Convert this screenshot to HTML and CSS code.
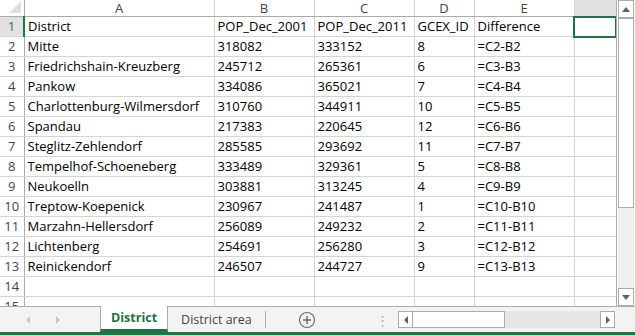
FILE: index.html
```html
<!DOCTYPE html>
<html lang="en">
<head>
    <meta charset="UTF-8">
    <title>District - Excel</title>
    <link rel="stylesheet" href="styles.css">
</head>
<body>
    <div class="sheet">
        <div class="grid">
            <table class="cells">
                <colgroup>
                    <col class="c-hdr"><col class="c-a"><col class="c-b"><col class="c-c"><col class="c-d"><col class="c-e"><col class="c-f">
                </colgroup>
                <tr class="colhead">
                    <th class="corner"><span class="tri"></span></th>
                    <th>A</th><th>B</th><th>C</th><th>D</th><th>E</th><th class="sel">&nbsp;</th>
                </tr>
                <tr><th class="sel">1</th><td>District</td><td>POP_Dec_2001</td><td>POP_Dec_2011</td><td>GCEX_ID</td><td>Difference</td><td class="active"></td></tr>
                <tr><th>2</th><td>Mitte</td><td>318082</td><td>333152</td><td>8</td><td>=C2-B2</td><td></td></tr>
                <tr><th>3</th><td>Friedrichshain-Kreuzberg</td><td>245712</td><td>265361</td><td>6</td><td>=C3-B3</td><td></td></tr>
                <tr><th>4</th><td>Pankow</td><td>334086</td><td>365021</td><td>7</td><td>=C4-B4</td><td></td></tr>
                <tr><th>5</th><td>Charlottenburg-Wilmersdorf</td><td>310760</td><td>344911</td><td>10</td><td>=C5-B5</td><td></td></tr>
                <tr><th>6</th><td>Spandau</td><td>217383</td><td>220645</td><td>12</td><td>=C6-B6</td><td></td></tr>
                <tr><th>7</th><td>Steglitz-Zehlendorf</td><td>285585</td><td>293692</td><td>11</td><td>=C7-B7</td><td></td></tr>
                <tr><th>8</th><td>Tempelhof-Schoeneberg</td><td>333489</td><td>329361</td><td>5</td><td>=C8-B8</td><td></td></tr>
                <tr><th>9</th><td>Neukoelln</td><td>303881</td><td>313245</td><td>4</td><td>=C9-B9</td><td></td></tr>
                <tr><th>10</th><td>Treptow-Koepenick</td><td>230967</td><td>241487</td><td>1</td><td>=C10-B10</td><td></td></tr>
                <tr><th>11</th><td>Marzahn-Hellersdorf</td><td>256089</td><td>249232</td><td>2</td><td>=C11-B11</td><td></td></tr>
                <tr><th>12</th><td>Lichtenberg</td><td>254691</td><td>256280</td><td>3</td><td>=C12-B12</td><td></td></tr>
                <tr><th>13</th><td>Reinickendorf</td><td>246507</td><td>244727</td><td>9</td><td>=C13-B13</td><td></td></tr>
                <tr><th>14</th><td></td><td></td><td></td><td></td><td></td><td></td></tr>
                <tr><th>15</th><td></td><td></td><td></td><td></td><td></td><td></td></tr>
            </table>
        </div>
        <div class="vscroll">
            <div class="arrow up"><span class="tri-up"></span></div>
            <div class="track"><div class="thumb"></div></div>
            <div class="arrow down"><span class="tri-down"></span></div>
        </div>
    </div>

    <div class="tabbar">
        <div class="nav">
            <span class="tri-left"></span>
            <span class="tri-right"></span>
        </div>
        <div class="tab current">District</div>
        <div class="tab">District area</div>
        <div class="tabsep"></div>
        <div class="addsheet">
            <svg width="18" height="18" viewBox="0 0 18 18">
                <circle cx="9" cy="9" r="7.5" fill="none" stroke="#6a6a6a" stroke-width="1.2"/>
                <path d="M9 5v8M5 9h8" stroke="#6a6a6a" stroke-width="1.4"/>
            </svg>
        </div>
        <div class="grip">&#8942;</div>
        <div class="hscroll">
            <div class="arrow left"><span class="tri-left dark"></span></div>
            <div class="htrack"><div class="hthumb"></div></div>
            <div class="arrow right"><span class="tri-right dark"></span></div>
        </div>
    </div>
    <div class="status"></div>
</body>
</html>
```

FILE: styles.css
```css
html, body {
    margin: 0;
    padding: 0;
    width: 635px;
    height: 335px;
    overflow: hidden;
    background: #fff;
    font-family: "Open Sans", "Liberation Sans", sans-serif;
}
.sheet {
    display: flex;
    height: 306px;
    overflow: hidden;
}
.grid {
    width: 616px;
    overflow: hidden;
}
.cells {
    border-collapse: collapse;
    table-layout: fixed;
    width: 616px;
    font-size: 13px;
    color: #000;
}
.c-hdr { width: 24px; }
.c-a { width: 190px; }
.c-b { width: 100px; }
.c-c { width: 100px; }
.c-d { width: 60px; }
.c-e { width: 100px; }
.c-f { width: 42px; }

.cells td, .cells th {
    height: 19px;
    padding: 0 0 0 3px;
    border: 1px solid #d4d4d4;
    white-space: nowrap;
    overflow: hidden;
    text-align: left;
    font-weight: normal;
    line-height: 19px;
}
.cells th {
    color: #444;
    text-align: center;
    padding: 0;
    border-color: #ababab #d4d4d4 #d4d4d4 #d4d4d4;
    border-right-color: #ababab;
}
.cells tr:first-child th {
    height: 16px;
    line-height: 16px;
    border-top: none;
    border-bottom-color: #ababab;
    border-right-color: #d4d4d4;
}
.cells tr th:first-child {
    border-left: none;
    border-right-color: #ababab;
}
.cells th.sel {
    background: #e1e1e1;
    color: #217346;
}
.cells tr:not(:first-child) th.sel {
    border-right: 2px solid #217346;
}
.cells .corner {
    position: relative;
}
.tri {
    position: absolute;
    right: 3px;
    bottom: 3px;
    width: 0;
    height: 0;
    border-left: 12px solid transparent;
    border-bottom: 12px solid #dfdfdf;
}
.cells td.active {
    outline: 2px solid #217346;
    outline-offset: -1px;
}

.vscroll {
    width: 19px;
    display: flex;
    flex-direction: column;
    background: #fff;
    border-left: 1px solid #ababab;
    box-sizing: border-box;
}
.vscroll .arrow {
    height: 16px;
    margin: 0 1px 0 1px;
    border: 1px solid #ababab;
    background: #fff;
    display: flex;
    align-items: center;
    justify-content: center;
}
.vscroll .track {
    flex: 1;
    background: #f0f0f0;
    margin: 0 1px;
}
.thumb {
    height: 190px;
    background: #fff;
    border: 1px solid #ababab;
    box-sizing: border-box;
}
.tri-up {
    border-left: 4px solid transparent;
    border-right: 4px solid transparent;
    border-bottom: 5px solid #606060;
}
.tri-down {
    border-left: 4px solid transparent;
    border-right: 4px solid transparent;
    border-top: 5px solid #606060;
}
.tri-left {
    display: inline-block;
    border-top: 4px solid transparent;
    border-bottom: 4px solid transparent;
    border-right: 4px solid #c6c6c6;
}
.tri-right {
    display: inline-block;
    border-top: 4px solid transparent;
    border-bottom: 4px solid transparent;
    border-left: 4px solid #c6c6c6;
}
.tri-left.dark { border-right-color: #606060; }
.tri-right.dark { border-left-color: #606060; }

.tabbar {
    height: 26px;
    background: #f3f3f3;
    border-top: 1px solid #ababab;
    box-sizing: border-box;
    display: flex;
    align-items: stretch;
    font-size: 13px;
}
.nav {
    width: 100px;
    display: flex;
    align-items: center;
    gap: 26px;
    padding-left: 26px;
    box-sizing: border-box;
}
.tab {
    display: flex;
    align-items: center;
    padding: 0 13px;
    color: #444;
    margin-top: -1px;
    font-size: 12.5px;
}
.tab.current {
    background: #fff;
    color: #217346;
    font-weight: bold;
    border: 1px solid #ababab;
    border-top: none;
    border-bottom: 3px solid #217346;
    padding: 0 10px;
}
.tabsep {
    width: 1px;
    background: #ababab;
    margin: 4px 0 4px 0;
}
.addsheet {
    width: 82px;
    display: flex;
    align-items: center;
    justify-content: center;
}
.grip {
    width: 18px;
    margin-left: auto;
    margin-right: 7px;
    color: #b0b0b0;
    display: flex;
    align-items: center;
    justify-content: center;
}
.hscroll {
    display: flex;
    align-items: center;
    width: 217px;
    margin-right: 20px;
}
.hscroll .arrow {
    width: 15px;
    height: 17px;
    border: 1px solid #ababab;
    background: #fff;
    box-sizing: border-box;
    display: flex;
    align-items: center;
    justify-content: center;
}
.htrack {
    flex: 1;
    height: 17px;
    background: #e6e6e6;
    display: flex;
}
.hthumb {
    width: 92px;
    height: 17px;
    background: #fff;
    border: 1px solid #ababab;
    border-left: none;
    box-sizing: border-box;
}
.status {
    height: 3px;
    background: #217346;
}
```
